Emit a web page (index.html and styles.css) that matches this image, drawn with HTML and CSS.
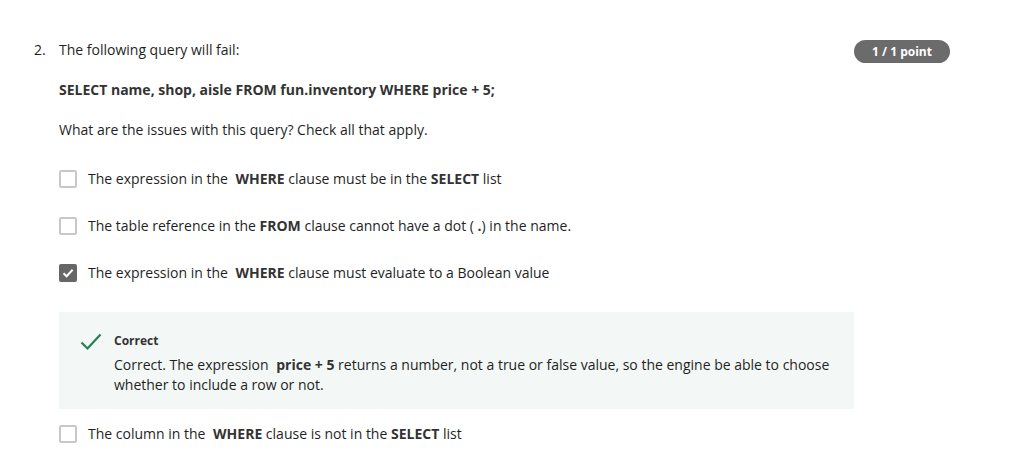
FILE: index.html
```html
<!DOCTYPE html>
<html>
<head>
<meta charset="utf-8">
<link rel="stylesheet" href="styles.css">
</head>
<body>
<div class="question">
  <div class="num">2.</div>
  <div class="content">
    <div class="header">
      <p class="prompt">The following query will fail:</p>
      <span class="badge">1 / 1 point</span>
    </div>
    <p class="sql"><strong>SELECT name, shop, aisle FROM fun.inventory WHERE price + 5;</strong></p>
    <p class="ask">What are the issues with this query? Check all that apply.</p>
    <div class="options">
      <label class="option"><span class="box"></span><span>The expression in the <strong class="sp">WHERE</strong> clause must be in the <strong>SELECT</strong> list</span></label>
      <label class="option"><span class="box"></span><span>The table reference in the <strong>FROM</strong> clause cannot have a dot ( <strong>.</strong>) in the name.</span></label>
      <label class="option"><span class="box checked"><svg width="14" height="14" viewBox="0 0 14 14"><path d="M2.5 7.2 L5.6 10.2 L11.6 3.8" fill="none" stroke="#fff" stroke-width="2"/></svg></span><span>The expression in the <strong class="sp">WHERE</strong> clause must evaluate to a Boolean value</span></label>
      <div class="feedback">
        <svg class="tick" width="22" height="18" viewBox="0 0 22 18"><path d="M1.5 9.5 L7.5 15.5 L20.5 1.5" fill="none" stroke="#1f8354" stroke-width="2.2"/></svg>
        <div class="fb-text">
          <div class="fb-title">Correct</div>
          <p class="fb-body">Correct. The expression <strong class="sp">price + 5</strong> returns a number, not a true or false value, so the engine be able to choose whether to include a row or not.</p>
        </div>
      </div>
      <label class="option"><span class="box"></span><span>The column in the <strong class="sp">WHERE</strong> clause is not in the <strong>SELECT</strong> list</span></label>
    </div>
  </div>
</div>
</body>
</html>
```

FILE: styles.css
```css
html, body {
  margin: 0;
  padding: 0;
  background: #fff;
}
body {
  font-family: "Open Sans", "Noto Sans", sans-serif;
  font-size: 14px;
  line-height: 20px;
  color: #1f1f1f;
}
p { margin: 0; }
strong { font-weight: 700; color: #333; }
strong.sp { margin-left: 4px; }
.question {
  display: flex;
  padding: 40px 0 0 34px;
  width: 916px;
}
.num {
  width: 25px;
  flex: none;
}
.content {
  flex: 1;
}
.header {
  display: flex;
  justify-content: space-between;
  align-items: flex-start;
}
.badge {
  background: #6b6b6b;
  color: #fff;
  font-size: 12px;
  font-weight: 700;
  line-height: 23px;
  height: 23px;
  width: 96px;
  text-align: center;
  border-radius: 12px;
}
.sql {
  margin-top: 17px;
}
.ask {
  margin-top: 20px;
}
.options {
  display: flex;
  flex-direction: column;
  margin-top: 29px;
  width: 795px;
}
.option {
  display: flex;
  align-items: center;
  gap: 11px;
  height: 20px;
  margin-bottom: 27px;
}
.box {
  width: 14px;
  height: 14px;
  border: 2px solid #c8c8c8;
  border-radius: 2px;
  flex: none;
  display: flex;
  align-items: center;
  justify-content: center;
}
.box.checked {
  background: #666;
  border-color: #666;
}
.feedback {
  background: #f3f8f6;
  display: flex;
  gap: 12px;
  padding: 20px 20px 14px 21px;
  margin-top: 2px;
  margin-bottom: 15px;
}
.tick {
  flex: none;
  margin-top: 1px;
}
.fb-title {
  font-size: 12px;
  font-weight: 700;
  color: #333;
  line-height: 18px;
}
.fb-body {
  margin-top: 5px;
}
```
